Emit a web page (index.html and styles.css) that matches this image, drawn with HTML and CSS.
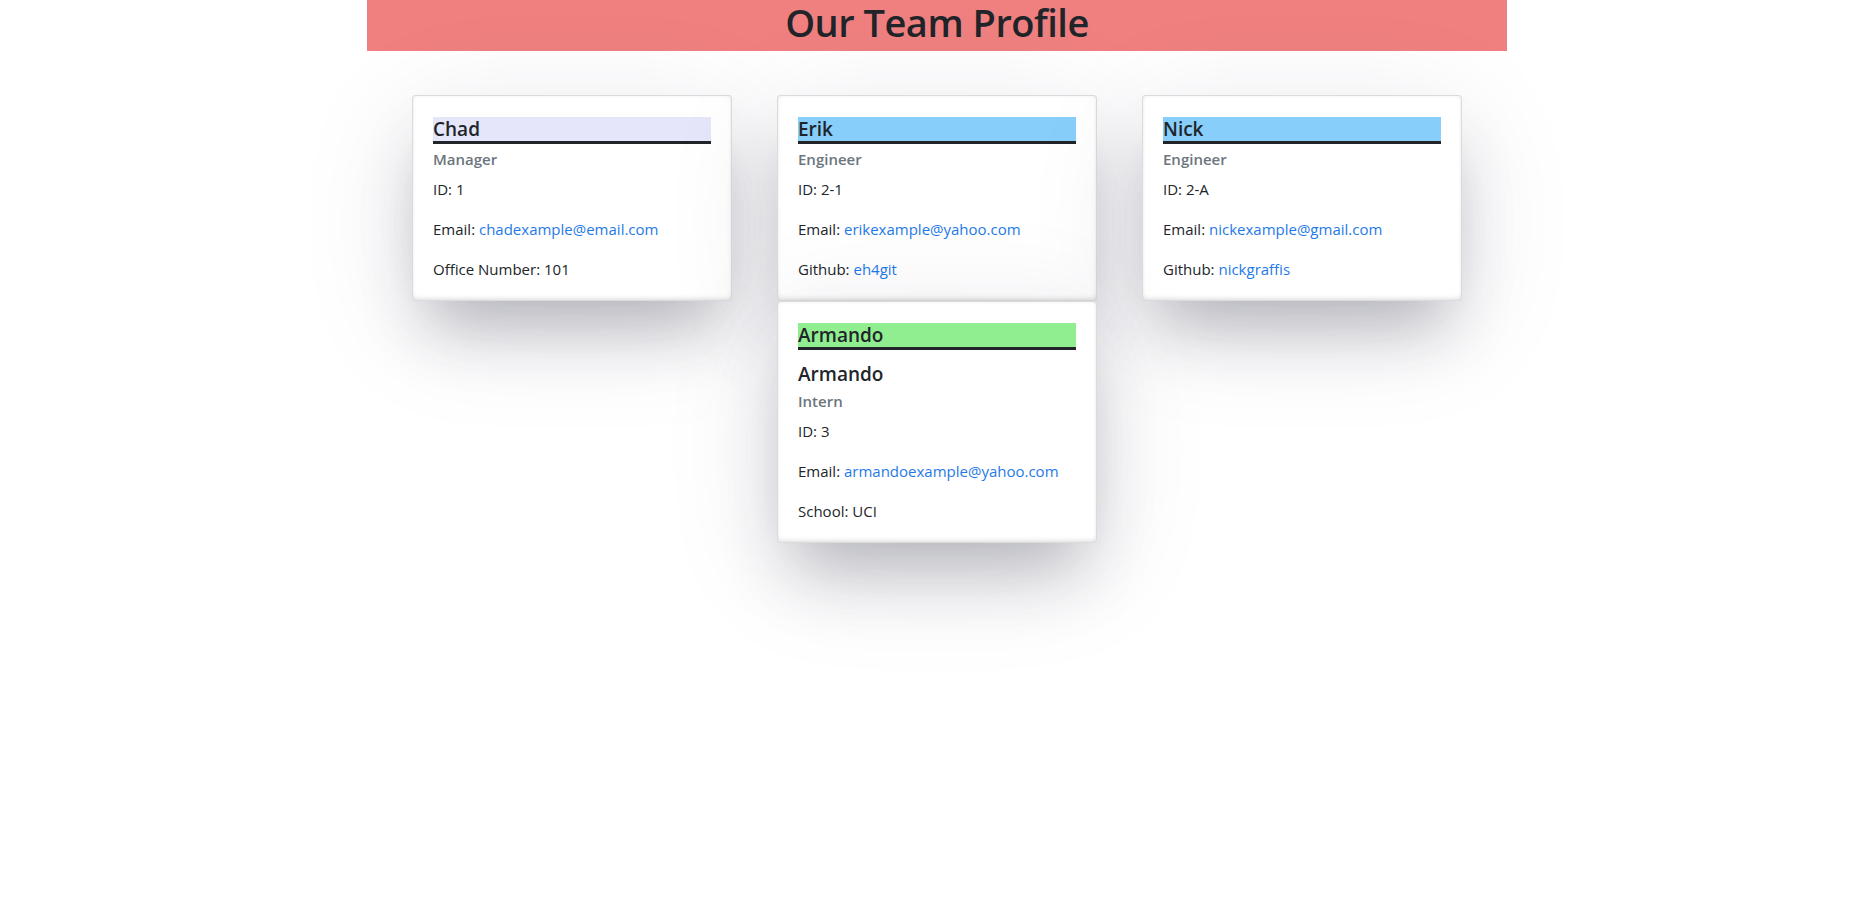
FILE: index.html
```html
<!DOCTYPE html>
<html lang="en">
<head>
<meta charset="utf-8">
<title>Our Team Profile</title>
<link rel="stylesheet" href="styles.css">
</head>
<body>
  <header class="banner">
    <h1 class="banner-title">Our Team Profile</h1>
  </header>
  <main class="team">
    <div class="card">
      <h5 class="card-title bg-manager">Chad</h5>
      <h6 class="card-subtitle">Manager</h6>
      <p class="card-text">ID: 1</p>
      <p class="card-text">Email: <a href="#">chadexample@email.com</a></p>
      <p class="card-text">Office Number: 101</p>
    </div>
    <div class="card">
      <h5 class="card-title bg-engineer">Erik</h5>
      <h6 class="card-subtitle">Engineer</h6>
      <p class="card-text">ID: 2-1</p>
      <p class="card-text">Email: <a href="#">erikexample@yahoo.com</a></p>
      <p class="card-text">Github: <a href="#">eh4git</a></p>
    </div>
    <div class="card">
      <h5 class="card-title bg-engineer">Nick</h5>
      <h6 class="card-subtitle">Engineer</h6>
      <p class="card-text">ID: 2-A</p>
      <p class="card-text">Email: <a href="#">nickexample@gmail.com</a></p>
      <p class="card-text">Github: <a href="#">nickgraffis</a></p>
    </div>
    <div class="card">
      <h5 class="card-title bg-intern">Armando</h5>
      <h5 class="card-title plain">Armando</h5>
      <h6 class="card-subtitle">Intern</h6>
      <p class="card-text">ID: 3</p>
      <p class="card-text">Email: <a href="#">armandoexample@yahoo.com</a></p>
      <p class="card-text">School: UCI</p>
    </div>
  </main>
</body>
</html>
```
FILE: styles.css
```css
* { box-sizing: border-box; }

html, body {
  margin: 0;
  padding: 0;
  background: #fff;
}

body {
  min-height: 100vh;
  font-family: "Open Sans", "Noto Sans", "Liberation Sans", sans-serif;
  font-size: 16px;
  line-height: 24px;
  color: #212529;
}

.banner {
  width: 1140px;
  height: 51px;
  margin: 0 auto;
  padding-top: 1px;
  background: #f08080;
  text-align: center;
}

.banner-title {
  margin: 0;
  font-size: 38px;
  font-weight: 600;
  line-height: 42px;
  letter-spacing: -0.5px;
  color: #212529;
}

.team {
  width: 1140px;
  margin: 44px auto 0;
  padding-bottom: 200px;
  display: flex;
  flex-wrap: wrap;
  justify-content: space-evenly;
}

.card {
  width: 320px;
  padding: 21px 20px 19px;
  background: #fff;
  border: 1px solid rgba(0, 0, 0, 0.14);
  border-radius: 4px;
  box-shadow:
    inset 0 -4px 5px -2px rgba(0, 0, 0, 0.09),
    inset 0 0 4px rgba(0, 0, 0, 0.06),
    0 40px 64px -16px rgba(40, 40, 60, 0.30),
    0 24px 120px rgba(40, 40, 80, 0.11);
}

.card-title {
  margin: 0 0 12px;
  font-size: 19px;
  font-weight: 600;
  line-height: 24px;
  border-bottom: 3px solid #212529;
}

.card-title.plain {
  border-bottom: 0;
}

.bg-manager { background: #e6e6fa; }
.bg-engineer { background: #87cefa; }
.bg-intern { background: #90ee90; }

.card-subtitle {
  margin: -6px 0 8px;
  font-size: 15px;
  font-weight: 600;
  line-height: 19.2px;
  color: #6c757d;
}

.card-text {
  margin: 0 0 16px;
  font-size: 15px;
  line-height: 24px;
}

.card-text:last-child {
  margin-bottom: 0;
}

a {
  color: #1f7ae8;
  text-decoration: none;
}
```
